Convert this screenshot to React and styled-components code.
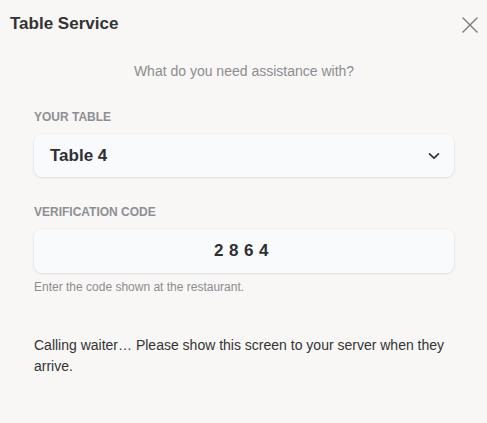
import React from 'react';
import styled, { createGlobalStyle } from 'styled-components';

const GlobalStyle = createGlobalStyle`
  html, body {
    margin: 0;
    padding: 0;
    background: #f8f7f5;
  }
  body {
    font-family: "Liberation Sans", Arial, sans-serif;
  }
`;

function App() {
  return (
    <Modal>
      <GlobalStyle />
      <Header>
        <Title>Table Service</Title>
        <CloseButton aria-label="Close">
          <svg width="16" height="16" viewBox="0 0 16 16" fill="none">
            <path d="M1 1L15 15M15 1L1 15" stroke="#7a7a7a" strokeWidth="1.4" strokeLinecap="round" />
          </svg>
        </CloseButton>
      </Header>

      <Body>
        <Subtitle>What do you need assistance with?</Subtitle>

        <FieldLabel>Your table</FieldLabel>
        <SelectBox>
          <SelectValue>Table 4</SelectValue>
          <svg width="12" height="8" viewBox="0 0 12 8" fill="none">
            <path d="M1.5 1.8L6 6.2L10.5 1.8" stroke="#333" strokeWidth="1.7" strokeLinecap="round" strokeLinejoin="round" />
          </svg>
        </SelectBox>

        <FieldLabel top={27}>Verification code</FieldLabel>
        <CodeBox>2864</CodeBox>
        <Hint>Enter the code shown at the restaurant.</Hint>

        <Message>
          Calling waiter… Please show this screen to your server when they arrive.
        </Message>
      </Body>
    </Modal>
  );
}

export default App;

const Modal = styled.div`
  width: 487px;
  min-height: 423px;
  background: #f8f7f5;
  color: #333;
`;

const Header = styled.div`
  display: flex;
  align-items: center;
  justify-content: space-between;
  padding: 14px 9px 0 10px;
`;

const Title = styled.h2`
  margin: 0;
  font-size: 17px;
  line-height: 20px;
  font-weight: 700;
  color: #333;
`;

const CloseButton = styled.button`
  display: flex;
  align-items: center;
  justify-content: center;
  padding: 0;
  margin-top: 1px;
  border: none;
  background: transparent;
`;

const Body = styled.div`
  display: flex;
  flex-direction: column;
  padding: 0 33px 0 34px;
`;

const Subtitle = styled.p`
  margin: 27px 0 0;
  text-align: center;
  font-size: 14px;
  line-height: 20px;
  color: #8c8c90;
`;

const FieldLabel = styled.label`
  margin-top: ${(p) => (p.top != null ? p.top : 28)}px;
  font-size: 12px;
  line-height: 16px;
  font-weight: 700;
  text-transform: uppercase;
  color: #8e8e93;
`;

const SelectBox = styled.div`
  display: flex;
  align-items: center;
  justify-content: space-between;
  height: 43px;
  margin-top: 9px;
  padding: 0 14px 0 16px;
  box-sizing: border-box;
  background: #f9fafb;
  border-radius: 8px;
  box-shadow: 0 1px 3px rgba(0, 0, 0, 0.09), 0 0 0 1px rgba(0, 0, 0, 0.015);
`;

const SelectValue = styled.span`
  font-size: 17px;
  font-weight: 700;
  color: #2f2f33;
`;

const CodeBox = styled.div`
  display: flex;
  align-items: center;
  justify-content: center;
  height: 44px;
  margin-top: 9px;
  box-sizing: border-box;
  background: #f9fafb;
  border-radius: 8px;
  box-shadow: 0 1px 3px rgba(0, 0, 0, 0.09), 0 0 0 1px rgba(0, 0, 0, 0.015);
  font-size: 17px;
  font-weight: 700;
  letter-spacing: 5.5px;
  color: #2f2f33;
`;

const Hint = styled.p`
  margin: 6px 0 0;
  font-size: 12px;
  line-height: 16px;
  color: #8c8c90;
`;

const Message = styled.p`
  margin: 40px 0 0;
  font-size: 14px;
  line-height: 21px;
  color: #333;
`;
